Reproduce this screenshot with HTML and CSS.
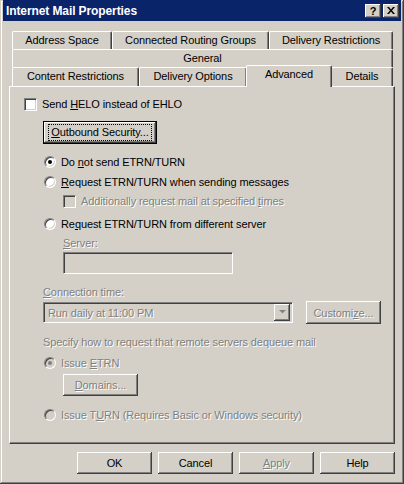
FILE: index.html
```html
<!DOCTYPE html>
<html lang="en">
<head>
  <meta charset="UTF-8" />
  <title>Internet Mail Properties</title>
  <link rel="stylesheet" href="styles.css">
</head>
<body>

  <div class="window">
    <div class="titlebar">
      <span class="title">Internet Mail Properties</span>
      <div class="caption-btns">
        <span class="cbtn help">?</span>
        <span class="cbtn">
          <svg width="8" height="7" viewBox="0 0 8 7"><path d="M0 0h2l2 2.5L6 0h2L5 3.5 8 7H6L4 4.5 2 7H0l3-3.5z" fill="#000"/></svg>
        </span>
      </div>
    </div>

    <div class="client">
      <!-- Tab strip, three rows -->
      <div class="tabs">
        <div class="tabrow row1">
          <div class="tab w-addr">Address Space</div>
          <div class="tab w-crg">Connected Routing Groups</div>
          <div class="tab w-dr">Delivery Restrictions</div>
        </div>
        <div class="tabrow row2">
          <div class="tab w-full">General</div>
        </div>
        <div class="tabrow row3">
          <div class="tab w-cr">Content Restrictions</div>
          <div class="tab w-do">Delivery Options</div>
          <div class="tab w-adv selected">Advanced</div>
          <div class="tab w-det">Details</div>
        </div>
      </div>

      <div class="panel">
        <label class="opt row-helo">
          <span class="check"></span>
          <span>Send <u>H</u>ELO instead of EHLO</span>
        </label>

        <div class="btn focus btn-outbound"><span class="focus-rect"><u>O</u>utbound Security...</span></div>

        <label class="opt radio-row r1">
          <span class="radio checked"></span>
          <span>Do <u>n</u>ot send ETRN/TURN</span>
        </label>
        <label class="opt radio-row r2">
          <span class="radio"></span>
          <span><u>R</u>equest ETRN/TURN when sending messages</span>
        </label>
        <label class="opt disabled sub-check">
          <span class="check off"></span>
          <span>Additionally request mail at specified <u>t</u>imes</span>
        </label>
        <label class="opt radio-row r3">
          <span class="radio"></span>
          <span>Re<u>q</u>uest ETRN/TURN from different server</span>
        </label>

        <div class="label disabled lbl-server"><u>S</u>erver:</div>
        <div class="textbox"></div>

        <div class="label disabled lbl-conn"><u>C</u>onnection time:</div>
        <div class="conn-row">
          <div class="combo">
            <span class="combo-text">Run daily at 11:00 PM</span>
            <span class="combo-arrow">
              <svg width="7" height="5" viewBox="0 0 7 5"><path d="M1 1h5L3.5 3.5z" fill="#fff"/><path d="M0 0h7L3.5 3.5z" fill="#808080"/></svg>
            </span>
          </div>
          <div class="btn disabled btn-customize">Customi<u>z</u>e...</div>
        </div>

        <div class="label disabled lbl-specify">Specify how to request that remote servers dequeue mail</div>

        <label class="opt disabled radio-row r4">
          <span class="radio checked off"></span>
          <span>Issue <u>E</u>TRN</span>
        </label>
        <div class="btn disabled btn-domains"><u>D</u>omains...</div>
        <label class="opt disabled radio-row r5">
          <span class="radio off"></span>
          <span>Issue T<u>U</u>RN (Requires Basic or Windows security)</span>
        </label>
      </div>

      <div class="actions">
        <div class="btn">OK</div>
        <div class="btn">Cancel</div>
        <div class="btn disabled"><u>A</u>pply</div>
        <div class="btn">Help</div>
      </div>
    </div>
  </div>

</body>
</html>
```

FILE: styles.css
```css
body {
  margin: 0;
  background: #d4d0c8;
  font-family: 'Liberation Sans', Arial, sans-serif;
  font-size: 11px;
  letter-spacing: -0.1px;
  color: #000;
}

.window {
  width: 404px;
  height: 484px;
  box-sizing: border-box;
  padding: 0 3px 3px 3px;
  background: #d4d0c8;
  box-shadow: inset -1px -1px #404040, inset 1px 1px #d4d0c8,
              inset -2px -2px #808080, inset 2px 2px #fff;
  display: flex;
  flex-direction: column;
}

/* Title bar */
.titlebar {
  height: 21px;
  background: #0a246a;
  display: flex;
  align-items: center;
  justify-content: space-between;
  padding: 0 2px 0 3px;
}

.title {
  color: #fff;
  font-weight: bold;
  font-size: 12px;
  letter-spacing: -0.1px;
}

.caption-btns {
  display: flex;
  gap: 2px;
}

.cbtn {
  width: 16px;
  height: 14px;
  box-sizing: border-box;
  background: #d4d0c8;
  box-shadow: inset -1px -1px #404040, inset 1px 1px #fff, inset -2px -2px #808080;
  display: flex;
  align-items: center;
  justify-content: center;
}

.cbtn.help {
  font-weight: bold;
  font-size: 11px;
  line-height: 14px;
}

/* Client */
.client {
  flex: 1;
  display: flex;
  flex-direction: column;
  padding-top: 10px;
}

.tabs {
  margin: 0 8px 0 9px;
}

.tabrow {
  display: flex;
  align-items: flex-start;
}

.tabrow.row1,
.tabrow.row2 {
  height: 18px;
}

.tabrow.row3 {
  height: 19px;
}

.tab {
  height: 18px;
  box-sizing: border-box;
  flex-shrink: 0;
  border-top: 1px solid #fff;
  border-left: 1px solid #fff;
  border-right: 1px solid #404040;
  border-radius: 2px 2px 0 0;
  box-shadow: inset -1px 0 #808080;
  text-align: center;
  line-height: 17px;
  white-space: nowrap;
}

.row3 .tab {
  height: 19px;
}

.w-addr { width: 100px; }
.w-crg { width: 157px; }
.w-dr { width: 124px; }
.w-full { width: 381px; }
.w-cr { width: 127px; }
.w-do { width: 108px; }
.w-adv { width: 84px; }
.w-det { width: 62px; }

.tab.selected {
  position: relative;
  z-index: 1;
  width: 86px;
  height: 22px;
  margin: -2px -1px -1px -1px;
  background: #d4d0c8;
  line-height: 17px;
}

/* Property page */
.panel {
  position: relative;
  margin: 0 6px;
  height: 358px;
  box-sizing: border-box;
  border-top: 1px solid #fff;
  border-left: 1px solid #fff;
  border-right: 1px solid #404040;
  border-bottom: 1px solid #404040;
  box-shadow: inset -1px -1px #808080;
  padding: 10px 0 0 14px;
  display: flex;
  flex-direction: column;
  align-items: flex-start;
}

.opt {
  display: flex;
  align-items: center;
  height: 14px;
  white-space: nowrap;
}

.disabled {
  color: #808080;
  text-shadow: 1px 1px 0 #fff;
}

.check {
  width: 13px;
  height: 13px;
  box-sizing: border-box;
  background: #fff;
  border: 1px solid;
  border-color: #808080 #fff #fff #808080;
  box-shadow: inset 1px 1px #404040, inset -1px -1px #d4d0c8;
  margin-right: 5px;
  flex-shrink: 0;
}

.check.off {
  background: #d4d0c8;
}

.radio {
  width: 12px;
  height: 12px;
  box-sizing: border-box;
  border-radius: 50%;
  background: #fff;
  border: 1px solid;
  border-color: #808080 #fff #fff #808080;
  box-shadow: inset 1px 1px #404040, inset -1px -1px #d4d0c8;
  margin-right: 5px;
  flex-shrink: 0;
  display: flex;
  align-items: center;
  justify-content: center;
}

.radio.off {
  background: #d4d0c8;
}

.radio.checked::after {
  content: '';
  width: 4px;
  height: 4px;
  border-radius: 50%;
  background: #000;
}

.radio.checked.off::after {
  background: #808080;
}

.row-helo { margin-top: 0; }
.r1 { margin: 11px 0 0 20px; }
.r2 { margin: 6px 0 0 20px; }
.sub-check { margin: 5px 0 0 39px; }
.r3 { margin: 9px 0 0 20px; }
.r4 { margin: 7px 0 0 20px; }
.r5 { margin: 12px 0 0 20px; }

.label {
  height: 13px;
  line-height: 13px;
  white-space: nowrap;
}

.lbl-server { margin: 6px 0 0 39px; }
.lbl-conn { margin: 12px 0 0 19px; }
.lbl-specify { margin: 12px 0 0 19px; }

/* Buttons */
.btn {
  width: 75px;
  height: 22px;
  box-sizing: border-box;
  background: #d4d0c8;
  box-shadow: inset -1px -1px #404040, inset 1px 1px #fff, inset -2px -2px #808080;
  display: flex;
  align-items: center;
  justify-content: center;
  white-space: nowrap;
}

.btn.focus {
  border: 1px solid #000;
}

.focus-rect {
  outline: 1px dotted #000;
  outline-offset: 1px;
  padding: 0 1px;
  line-height: 13px;
}

.btn-outbound {
  width: 114px;
  height: 23px;
  margin: 10px 0 0 19px;
}

.btn-domains {
  margin: 4px 0 0 39px;
}

.btn-customize {
  height: 23px;
  margin-left: 13px;
}

.textbox {
  width: 170px;
  height: 22px;
  box-sizing: border-box;
  margin: 2px 0 0 39px;
  background: #d4d0c8;
  border: 1px solid;
  border-color: #808080 #fff #fff #808080;
  box-shadow: inset 1px 1px #404040, inset -1px -1px #d4d0c8;
}

.conn-row {
  display: flex;
  align-items: center;
  height: 23px;
  margin: 2px 0 0 19px;
}

.combo {
  width: 250px;
  height: 21px;
  box-sizing: border-box;
  background: #d4d0c8;
  border: 1px solid;
  border-color: #808080 #fff #fff #808080;
  box-shadow: inset 1px 1px #404040, inset -1px -1px #d4d0c8;
  display: flex;
  align-items: center;
  justify-content: space-between;
  padding: 0 2px 0 4px;
  color: #808080;
  text-shadow: 1px 1px 0 #fff;
}

.combo-arrow {
  width: 16px;
  height: 17px;
  box-sizing: border-box;
  box-shadow: inset -1px -1px #404040, inset 1px 1px #fff, inset -2px -2px #808080;
  display: flex;
  align-items: center;
  justify-content: center;
}

/* Dialog buttons */
.actions {
  display: flex;
  justify-content: flex-end;
  gap: 6px;
  margin: 8px 6px 0 0;
}
```
